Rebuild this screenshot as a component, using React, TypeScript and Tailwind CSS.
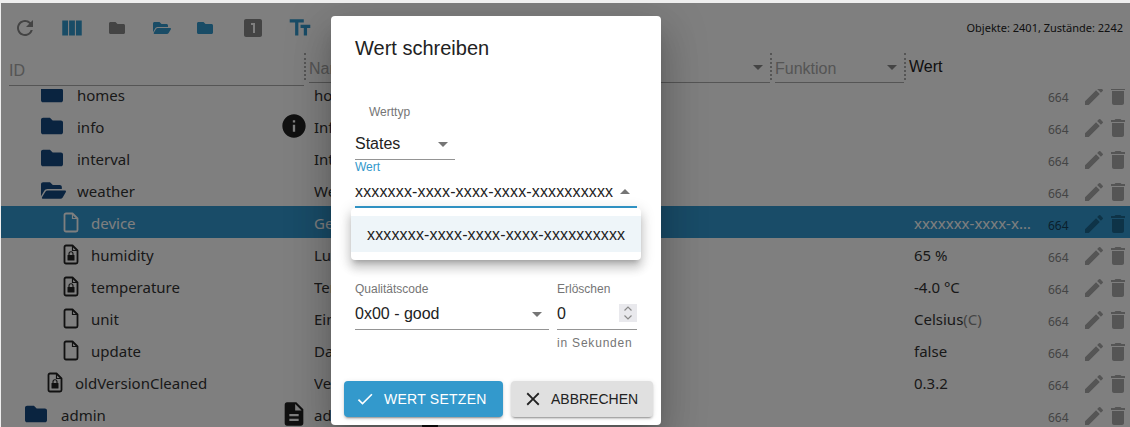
import type { ReactNode } from 'react'
import {
  MdArrowDropDown,
  MdArrowDropUp,
  MdCheck,
  MdClose,
  MdDelete,
  MdDescription,
  MdEdit,
  MdInfo,
  MdLooksOne,
  MdRefresh,
  MdTextFields,
  MdViewColumn,
} from 'react-icons/md'
import { FaFolder, FaFolderOpen } from 'react-icons/fa'

const MASKED = 'xxxxxxx-xxxx-xxxx-xxxx-xxxxxxxxxx'

type RowKind = 'folder' | 'open' | 'file' | 'locked'

interface Row {
  id: string
  name: string
  kind: RowKind
  indent: string
  gap: string
  value?: ReactNode
  badge?: ReactNode
  selected?: boolean
  roleIcon?: boolean
}

const rows: Row[] = [
  { id: 'homes', name: 'homes', kind: 'folder', indent: 'pl-[40px]', gap: 'gap-[14px]' },
  {
    id: 'info',
    name: 'Information',
    kind: 'folder',
    indent: 'pl-[40px]',
    gap: 'gap-[14px]',
    badge: <MdInfo className="text-[28px] text-[#222]" />,
  },
  { id: 'interval', name: 'Interval', kind: 'folder', indent: 'pl-[40px]', gap: 'gap-[14px]' },
  { id: 'weather', name: 'Weather', kind: 'open', indent: 'pl-[40px]', gap: 'gap-[11px]' },
  {
    id: 'device',
    name: 'Gerät',
    kind: 'file',
    indent: 'pl-[62px]',
    gap: 'gap-[12px]',
    value: MASKED,
    selected: true,
  },
  { id: 'humidity', name: 'Luftfeuchtigkeit', kind: 'locked', indent: 'pl-[62px]', gap: 'gap-[12px]', value: '65 %' },
  { id: 'temperature', name: 'Temperatur', kind: 'locked', indent: 'pl-[62px]', gap: 'gap-[12px]', value: '-4.0 °C' },
  {
    id: 'unit',
    name: 'Einheit',
    kind: 'file',
    indent: 'pl-[62px]',
    gap: 'gap-[12px]',
    value: (
      <>
        Celsius<span className="text-[#888]">(C)</span>
      </>
    ),
  },
  { id: 'update', name: 'Datum', kind: 'file', indent: 'pl-[62px]', gap: 'gap-[12px]', value: 'false' },
  { id: 'oldVersionCleaned', name: 'Version', kind: 'locked', indent: 'pl-[46px]', gap: 'gap-[12px]', value: '0.3.2' },
  {
    id: 'admin',
    name: 'admin',
    kind: 'folder',
    indent: 'pl-[24px]',
    gap: 'gap-[14px]',
    badge: <MdDescription className="text-[28px] text-[#222]" />,
    roleIcon: true,
  },
]

function FileIcon({ locked, className }: { locked?: boolean; className?: string }) {
  return (
    <svg viewBox="0 0 16 21" className={`h-[21px] w-[16px] shrink-0 ${className ?? ''}`} fill="none" stroke="currentColor">
      <path
        d="M3 1.500h6.500l5 5V18a1.500 1.500 0 0 1-1.500 1.500H3A1.500 1.500 0 0 1 1.500 18V3A1.500 1.500 0 0 1 3 1.500z"
        strokeWidth="1.8"
        strokeLinejoin="round"
      />
      <path d="M9.500 1.500v5h5" strokeWidth="1.2" />
      {locked && (
        <>
          <rect x="4.500" y="11" width="7" height="5.500" rx="0.600" fill="currentColor" stroke="none" />
          <path d="M6 11V9.700a2 2 0 0 1 4 0V11" strokeWidth="1.100" />
        </>
      )}
    </svg>
  )
}

function RowIcon({ kind, selected }: { kind: RowKind; selected?: boolean }) {
  if (kind === 'folder') return <FaFolder className="shrink-0 text-[22px] text-[#144880]" />
  if (kind === 'open') return <FaFolderOpen className="shrink-0 text-[25px] text-[#144880]" />
  return <FileIcon locked={kind === 'locked'} className={selected ? 'text-white' : 'text-[#222]'} />
}

function TreeRow({ row }: { row: Row }) {
  return (
    <div
      className={`flex h-8 shrink-0 items-center font-['Noto_Sans',sans-serif] text-[15px] ${
        row.selected ? 'bg-[#3399d0] text-white' : 'text-[#333]'
      }`}
    >
      <div className={`flex w-[308px] shrink-0 items-center ${row.indent} ${row.gap}`}>
        <RowIcon kind={row.kind} selected={row.selected} />
        <span className="relative top-[1px] truncate">{row.id}</span>
        {row.badge && <span className="ml-auto flex pr-[1px]">{row.badge}</span>}
      </div>
      <div className="relative h-full flex-1 pl-[5px] pt-[6px] leading-[22px]">
        <span className="block truncate">{row.name}</span>
        {row.roleIcon && <MdDescription className="absolute left-[109px] top-[8px] text-[24px] text-[#222]" />}
      </div>
      <div className="w-[134px] shrink-0 truncate pr-[14px] pt-[3px]">{row.value}</div>
      <div className={`w-[34px] shrink-0 pt-[8px] text-[12px] ${row.selected ? 'text-[#14405a]' : 'text-[#888]'}`}>
        664
      </div>
      <div className={`flex w-[48px] shrink-0 items-center pt-[3px] ${row.selected ? 'text-[#1c668e]' : 'text-[#aaa]'}`}>
        <MdEdit className="text-[24px]" />
        <MdDelete className="text-[24px]" />
      </div>
    </div>
  )
}

function HeaderFilter({ label, className, select }: { label: string; className: string; select?: boolean }) {
  return (
    <div className={`flex items-center justify-between self-start border-b border-[#aaa] text-[16px] text-[#aaa] ${className}`}>
      <span className="pt-[4px]">{label}</span>
      {select && <MdArrowDropDown className="text-[24px] text-[#888]" />}
    </div>
  )
}

function Dots() {
  return <div className="mt-[1px] h-[27px] w-[2px] shrink-0 border-l-2 border-dotted border-[#aaa]" />
}

function Toolbar() {
  return (
    <div className="flex h-[49px] items-center pl-[12px]">
      <MdRefresh className="text-[24px] text-[#888]" />
      <MdViewColumn className="ml-[22px] text-[26px] text-[#3399cc]" />
      <FaFolder className="ml-[24px] text-[16px] text-[#888]" />
      <FaFolderOpen className="ml-[28px] text-[18px] text-[#3399cc]" />
      <FaFolder className="ml-[26px] text-[16px] text-[#3399cc]" />
      <MdLooksOne className="ml-[28px] text-[24px] text-[#888]" />
      <MdTextFields className="ml-[22px] text-[26px] text-[#3399cc]" />
      <span className="ml-auto pr-[7px] pt-[2px] font-['Noto_Sans',sans-serif] text-[11px] text-[#222]">
        Objekte: 2401, Zustände: 2242
      </span>
    </div>
  )
}

function TableHeader() {
  return (
    <div className="flex h-[37px] shrink-0 font-['Liberation_Sans',sans-serif]">
      <HeaderFilter label="ID" className="ml-[8px] h-[34px] w-[295px]" />
      <Dots />
      <HeaderFilter label="Name" className="ml-[3px] h-[31px] w-[180px]" />
      <Dots />
      <HeaderFilter label="Rolle" className="ml-[3px] h-[31px] w-[92px]" select />
      <Dots />
      <HeaderFilter label="Raum" className="ml-[3px] h-[31px] w-[179px]" select />
      <Dots />
      <HeaderFilter label="Funktion" className="ml-[3px] h-[31px] w-[129px]" select />
      <Dots />
      <span className="ml-[3px] pt-[6px] text-[16px] leading-[18px] text-[#222]">Wert</span>
    </div>
  )
}

function SelectValue({ children, className }: { children: ReactNode; className: string }) {
  return (
    <div className={`flex h-[31px] items-center justify-between border-b border-[#949494] text-[16px] text-[#222] ${className}`}>
      <span>{children}</span>
      <MdArrowDropDown className="text-[24px] text-[#757575]" />
    </div>
  )
}

function Spinner() {
  return (
    <svg viewBox="0 0 18 18" className="h-[18px] w-[18px] bg-[#e9e9ed]" fill="none" stroke="#8a8a8a" strokeWidth="1.2">
      <path d="M5.500 6.500 9 3l3.500 3.500M5.500 11.500 9 15l3.500-3.500" />
    </svg>
  )
}

function WriteDialog() {
  return (
    <div className="absolute left-[330px] top-[13px] flex h-[409px] w-[330px] flex-col rounded bg-white font-['Liberation_Sans',sans-serif] shadow-[0_11px_15px_-7px_rgba(0,0,0,0.2),0_24px_38px_3px_rgba(0,0,0,0.14),0_9px_46px_8px_rgba(0,0,0,0.12)]">
      <h2 className="px-6 pt-[20px] text-[20px] font-normal leading-[24px] text-[#222]">Wert schreiben</h2>

      <div className="relative flex flex-col px-6 pt-[45px]">
        <label className="pl-[14px] text-[12px] leading-[14px] text-[#757575]">Werttyp</label>
        <SelectValue className="mt-[10px] w-[100px]">States</SelectValue>
        <label className="text-[12px] leading-[14px] text-[#3399cc]">Wert</label>
        <div className="flex h-[34px] items-center justify-between border-b-2 border-[#3399cc] pt-[4px] text-[16px] tracking-[0.15px] text-[#222]">
          <span className="whitespace-nowrap">{MASKED}</span>
          <MdArrowDropUp className="shrink-0 text-[24px] text-[#757575]" />
        </div>

        {/* offene Auswahlliste */}
        <div className="absolute left-[20px] top-[148px] w-[290px] rounded bg-white py-2 shadow-[0_5px_5px_-3px_rgba(0,0,0,0.2),0_8px_10px_1px_rgba(0,0,0,0.14),0_3px_14px_2px_rgba(0,0,0,0.12)]">
          <div className="flex h-9 items-center bg-[#eef5f9] pl-4 pt-[2px] text-[16px] tracking-[0.15px] text-[#222]">{MASKED}</div>
        </div>

        <div className="mt-[74px] flex gap-2">
          <div className="flex w-[194px] flex-col">
            <label className="text-[12px] leading-[14px] text-[#757575]">Qualitätscode</label>
            <SelectValue className="mt-[3px]">0x00 - good</SelectValue>
          </div>
          <div className="flex w-[80px] flex-col">
            <label className="text-[12px] leading-[14px] text-[#757575]">Erlöschen</label>
            <div className="mt-[3px] flex h-[31px] justify-between border-b border-[#949494] text-[16px] leading-[30px] text-[#222]">
              <span>0</span>
              <span className="mt-[5px] flex">
                <Spinner />
              </span>
            </div>
            <span className="mt-[6px] text-[12px] leading-[14px] tracking-[0.8px] text-[#757575]">in Sekunden</span>
          </div>
        </div>
      </div>

      <div className="mt-auto flex gap-2 pb-[8px] pl-[13px]">
        <button className="flex h-9 w-[159px] items-center gap-[9px] rounded bg-[#3399cc] pl-[11px] text-[14px] tracking-[0.25px] text-white shadow-[0_3px_1px_-2px_rgba(0,0,0,0.2),0_2px_2px_0_rgba(0,0,0,0.14),0_1px_5px_0_rgba(0,0,0,0.12)]">
          <MdCheck className="text-[20px]" />
          WERT SETZEN
        </button>
        <button className="flex h-9 w-[142px] items-center gap-[7px] rounded bg-[#e0e0e0] pl-[11px] text-[14px] text-[#222] shadow-[0_3px_1px_-2px_rgba(0,0,0,0.2),0_2px_2px_0_rgba(0,0,0,0.14),0_1px_5px_0_rgba(0,0,0,0.12)]">
          <MdClose className="text-[22px]" />
          ABBRECHEN
        </button>
      </div>
    </div>
  )
}

export default function App() {
  return (
    <div className="relative flex h-[427px] w-[1130px] flex-col overflow-hidden border-l border-t-[3px] border-[#eeeeee] bg-white">
      <Toolbar />
      <TableHeader />
      <div className="min-h-0 flex-1 overflow-hidden">
        <div className="-mt-[11px] flex flex-col">
          {rows.map((row) => (
            <TreeRow key={row.id} row={row} />
          ))}
        </div>
      </div>
      <div className="absolute -inset-1 bg-black/50" />
      <WriteDialog />
    </div>
  )
}
